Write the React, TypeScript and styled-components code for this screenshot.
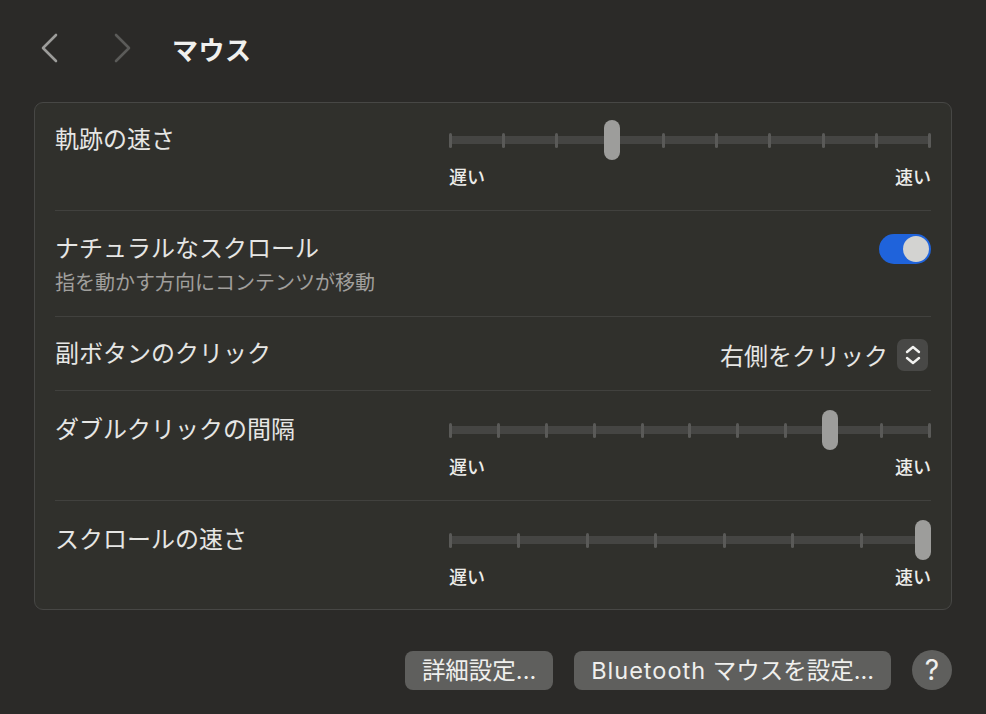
import React from 'react';
import styled, { createGlobalStyle } from 'styled-components';

const GlobalStyle = createGlobalStyle`
  html, body {
    margin: 0;
    padding: 0;
    background: #2b2a28;
  }

  body {
    font-family: "Inter", "Noto Sans CJK JP", sans-serif;
    -webkit-font-smoothing: antialiased;
  }
`;

const Window = styled.div`
  width: 986px;
  height: 714px;
  overflow: hidden;
  background: #2b2a28;
  color: #e6e6e4;
  display: flex;
  flex-direction: column;
`;

const Header = styled.header`
  height: 102px;
  box-sizing: border-box;
  padding: 0 0 6px 38px;
  display: flex;
  align-items: center;
`;

const NavButton = styled.div<{ $gap: number }>`
  width: 24px;
  height: 32px;
  margin-right: ${(p) => p.$gap}px;
  display: flex;
  align-items: center;
  justify-content: center;
`;

const Title = styled.h1`
  margin: 0;
  font-size: 26px;
  font-weight: 700;
  color: #f0f0ee;
  letter-spacing: 0.5px;
`;

const Panel = styled.section`
  margin: 0 34px;
  padding: 0 20px;
  background: #30302c;
  border: 1px solid #474745;
  border-radius: 9px;
`;

const Row = styled.div<{ $pad?: string; $align?: string; $height?: number }>`
  display: flex;
  justify-content: space-between;
  align-items: ${(p) => p.$align || 'flex-start'};
  padding: ${(p) => p.$pad || '0'};
  height: ${(p) => (p.$height ? `${p.$height}px` : 'auto')};
  border-bottom: 1px solid #41413e;

  &:last-child {
    border-bottom: none;
  }
`;

const Label = styled.div<{ $lh?: number }>`
  font-size: 24px;
  line-height: ${(p) => p.$lh || 40}px;
  color: #e6e6e4;
`;

const SubLabel = styled.div`
  font-size: 20px;
  line-height: 36px;
  color: #a09f9c;
`;

const SliderBox = styled.div`
  width: 482px;
  display: flex;
  flex-direction: column;
`;

const Rail = styled.div`
  position: relative;
  height: 40px;
  display: flex;
  align-items: center;
  justify-content: space-between;
  background: linear-gradient(#454543, #454543) center / 100% 8px no-repeat;
  border-radius: 4px;
`;

const Tick = styled.span`
  width: 3px;
  height: 15px;
  border-radius: 1.5px;
  background: #5a5a58;
`;

const Thumb = styled.span`
  position: absolute;
  top: 0;
  width: 16px;
  height: 40px;
  border-radius: 8px;
  background: #9d9d9b;
`;

const Scale = styled.div`
  margin-top: 8px;
  display: flex;
  justify-content: space-between;
  font-size: 18px;
  line-height: 20px;
  font-weight: 500;
  color: #ececea;
`;

const Toggle = styled.div`
  width: 52px;
  height: 30px;
  margin-top: 1px;
  box-sizing: border-box;
  padding: 2px;
  border-radius: 15px;
  background: #1f63db;
  display: flex;
  justify-content: flex-end;
`;

const Knob = styled.span`
  width: 26px;
  height: 26px;
  border-radius: 50%;
  background: #d3d3d1;
`;

const Popup = styled.div`
  display: flex;
  align-items: center;
  gap: 9px;
  margin: 2px 3px 0 0;
  font-size: 24px;
  color: #e6e6e4;
`;

const PopupArrows = styled.span`
  width: 31px;
  height: 32px;
  border-radius: 7px;
  background: #484846;
  display: flex;
  align-items: center;
  justify-content: center;
`;

const Footer = styled.footer`
  margin-top: 40px;
  padding-right: 34px;
  display: flex;
  justify-content: flex-end;
  align-items: center;
  gap: 21px;
`;

const Button = styled.button`
  height: 39px;
  padding: 0 17px;
  border: none;
  border-radius: 8px;
  background: #5f5f5d;
  color: #efefed;
  font-family: inherit;
  font-size: 23.5px;
  line-height: 39px;
`;

const Latin = styled.span`
  letter-spacing: 1px;
`;

const HelpButton = styled.button`
  width: 40px;
  height: 40px;
  padding: 0;
  border: none;
  border-radius: 50%;
  background: #5f5f5d;
  color: #efefed;
  font-family: inherit;
  font-size: 28px;
  font-weight: 400;
  line-height: 40px;
`;

const Chevron = ({ dir, color }: { dir: 'left' | 'right'; color: string }) => (
  <svg width="18" height="30" viewBox="0 0 18 30">
    <polyline
      points={dir === 'left' ? '15,2 2,15 15,28' : '3,2 16,15 3,28'}
      fill="none"
      stroke={color}
      strokeWidth="2.6"
      strokeLinecap="round"
      strokeLinejoin="round"
    />
  </svg>
);

const Slider = ({ ticks, value }: { ticks: number; value: number }) => (
  <SliderBox>
    <Rail>
      {Array.from({ length: ticks }).map((_, i) => (
        <Tick key={i} />
      ))}
      <Thumb style={{ left: `${value * (482 - 16)}px` }} />
    </Rail>
    <Scale>
      <span>遅い</span>
      <span>速い</span>
    </Scale>
  </SliderBox>
);

const App = () => {
  return (
    <>
      <GlobalStyle />
      <Window>
        <Header>
          <NavButton $gap={48}>
            <Chevron dir="left" color="#9c9c9a" />
          </NavButton>
          <NavButton $gap={38}>
            <Chevron dir="right" color="#5b5b59" />
          </NavButton>
          <Title>マウス</Title>
        </Header>

        <Panel>
          <Row $pad="17px 0 22px">
            <Label>軌跡の速さ</Label>
            <Slider ticks={10} value={3 / 9} />
          </Row>

          <Row $pad="22px 0 15px">
            <div>
              <Label $lh={32}>ナチュラルなスクロール</Label>
              <SubLabel>指を動かす方向にコンテンツが移動</SubLabel>
            </div>
            <Toggle>
              <Knob />
            </Toggle>
          </Row>

          <Row $align="center" $height={73}>
            <Label>副ボタンのクリック</Label>
            <Popup>
              <span>右側をクリック</span>
              <PopupArrows>
                <svg width="18" height="22" viewBox="0 0 18 22">
                  <polyline
                    points="3,8 9,3 15,8"
                    fill="none"
                    stroke="#f2f2f0"
                    strokeWidth="2.4"
                    strokeLinecap="round"
                    strokeLinejoin="round"
                  />
                  <polyline
                    points="3,14 9,19 15,14"
                    fill="none"
                    stroke="#f2f2f0"
                    strokeWidth="2.4"
                    strokeLinecap="round"
                    strokeLinejoin="round"
                  />
                </svg>
              </PopupArrows>
            </Popup>
          </Row>

          <Row $pad="19px 0 22px">
            <Label>ダブルクリックの間隔</Label>
            <Slider ticks={11} value={8 / 10} />
          </Row>

          <Row $pad="19px 0 21px">
            <Label>スクロールの速さ</Label>
            <Slider ticks={8} value={1} />
          </Row>
        </Panel>

        <Footer>
          <Button>詳細設定...</Button>
          <Button>
            <Latin>Bluetooth</Latin> マウスを設定...
          </Button>
          <HelpButton>?</HelpButton>
        </Footer>
      </Window>
    </>
  );
};

export default App;
